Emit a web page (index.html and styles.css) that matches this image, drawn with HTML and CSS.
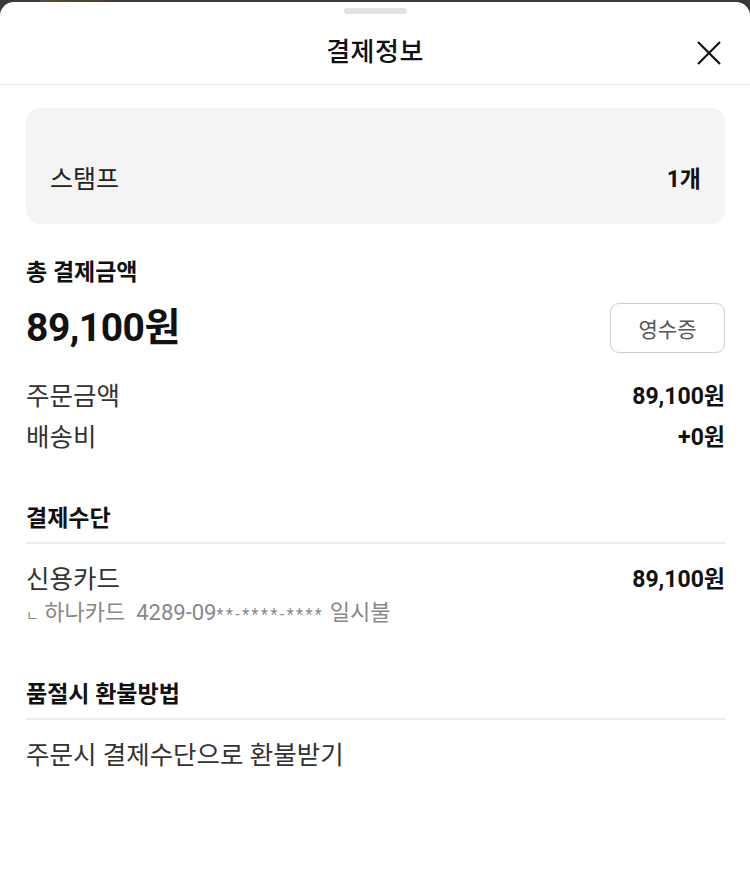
FILE: index.html
```html
<!DOCTYPE html>
<html lang="ko">
<head>
<meta charset="utf-8">
<link rel="stylesheet" href="styles.css">
</head>
<body>
<div class="backdrop">
  <div class="sheet">
    <div class="handle-wrap"><div class="handle"></div></div>
    <header class="header">
      <h1 class="title">결제정보</h1>
      <button class="close" aria-label="닫기">
        <svg width="26" height="26" viewBox="0 0 26 26"><path d="M2 2 L24 24 M24 2 L2 24" stroke="#111" stroke-width="2.2" fill="none"/></svg>
      </button>
    </header>
    <main class="content">
      <div class="stamp-box">
        <span class="stamp-label">스탬프</span>
        <span class="stamp-value">1개</span>
      </div>

      <section class="total">
        <h2 class="sec-title">총 결제금액</h2>
        <div class="total-row">
          <span class="total-amount">89,100원</span>
          <button class="receipt">영수증</button>
        </div>
        <div class="line-row first"><span class="lbl">주문금액</span><span class="val">89,100원</span></div>
        <div class="line-row"><span class="lbl">배송비</span><span class="val">+0원</span></div>
      </section>

      <section class="pay">
        <h2 class="sec-title bordered">결제수단</h2>
        <div class="line-row pay-row"><span class="lbl">신용카드</span><span class="val">89,100원</span></div>
        <div class="card-info"><span class="sub-mark">ㄴ</span> 하나카드 &nbsp;4289-09<span class="mask">**-****-****</span> 일시불</div>
      </section>

      <section class="refund">
        <h2 class="sec-title bordered">품절시 환불방법</h2>
        <p class="refund-text">주문시 결제수단으로 환불받기</p>
      </section>
    </main>
  </div>
</div>
</body>
</html>
```

FILE: styles.css
```css
* { box-sizing: border-box; }
html, body { margin: 0; padding: 0; }
body {
  font-family: Roboto, "Noto Sans CJK KR", sans-serif;
  color: #111;
  background: #3b3a38;
}
.backdrop {
  padding-top: 2px;
  height: 885px;
  background: linear-gradient(to right, #3b3a38 0, #3b3a38 40px, #5a4a38 40px, #4a3d30 110px, #3b3a38 110px);
  background-size: 100% 3px;
  background-repeat: no-repeat;
  background-color: #3b3a38;
}
.sheet {
  background: #fff;
  border-radius: 14px 14px 0 0;
  height: 883px;
}
.handle-wrap { display: flex; justify-content: center; padding-top: 6px; }
.handle { width: 63px; height: 6px; border-radius: 3px; background: #e2e2e2; }
.header {
  position: relative;
  height: 71px;
  display: flex;
  align-items: center;
  justify-content: center;
  border-bottom: 1px solid #e6e6e6;
}
.title {
  margin: 0;
  padding-top: 5px;
  font-size: 26px;
  font-weight: 500;
  letter-spacing: 0.5px;
  line-height: 1;
}
.close {
  position: absolute;
  right: 28px;
  top: 26px;
  background: none;
  border: 0;
  padding: 0;
  width: 26px; height: 26px;
}
.content { padding: 23px 25px 0 26px; }
.stamp-box {
  background: #f4f4f4;
  border-radius: 14px;
  height: 116px;
  display: flex;
  align-items: center;
  justify-content: space-between;
  padding: 22px 24px 0 24px;
}
.stamp-label { font-size: 25px; color: #222; }
.stamp-value { font-size: 23px; font-weight: 700; }
.total { padding-top: 34px; }
.sec-title {
  margin: 0;
  font-size: 23px;
  font-weight: 700;
  line-height: 30px;
}
.total-row {
  display: flex;
  justify-content: space-between;
  align-items: center;
  margin-top: 15px;
}
.total-amount { font-size: 39px; font-weight: 700; letter-spacing: -0.5px; line-height: 50px; }
.receipt {
  font-family: inherit;
  width: 115px; height: 50px;
  border: 1px solid #cfcfcf;
  border-radius: 9px;
  background: #fff;
  font-size: 21px;
  color: #555;
  padding: 0;
}
.line-row {
  display: flex;
  justify-content: space-between;
  align-items: center;
  height: 41px;
}
.line-row.first { margin-top: 20px; }
.lbl { font-size: 25.5px; color: #333; }
.val { font-size: 23px; font-weight: 700; color: #111; }
.pay { padding-top: 49px; }
.bordered { padding-bottom: 8px; border-bottom: 2px solid #ececec; }
.pay-row { margin-top: 12px; }
.card-info { font-size: 22px; color: #888; line-height: 28px; margin-top: 2px; }
.sub-mark { font-size: 14px; }
.mask { font-size: 16px; letter-spacing: 2.5px; }
.refund { padding-top: 51px; }
.refund-text { margin: 17px 0 0; font-size: 25.5px; line-height: 36px; color: #333; }
```
